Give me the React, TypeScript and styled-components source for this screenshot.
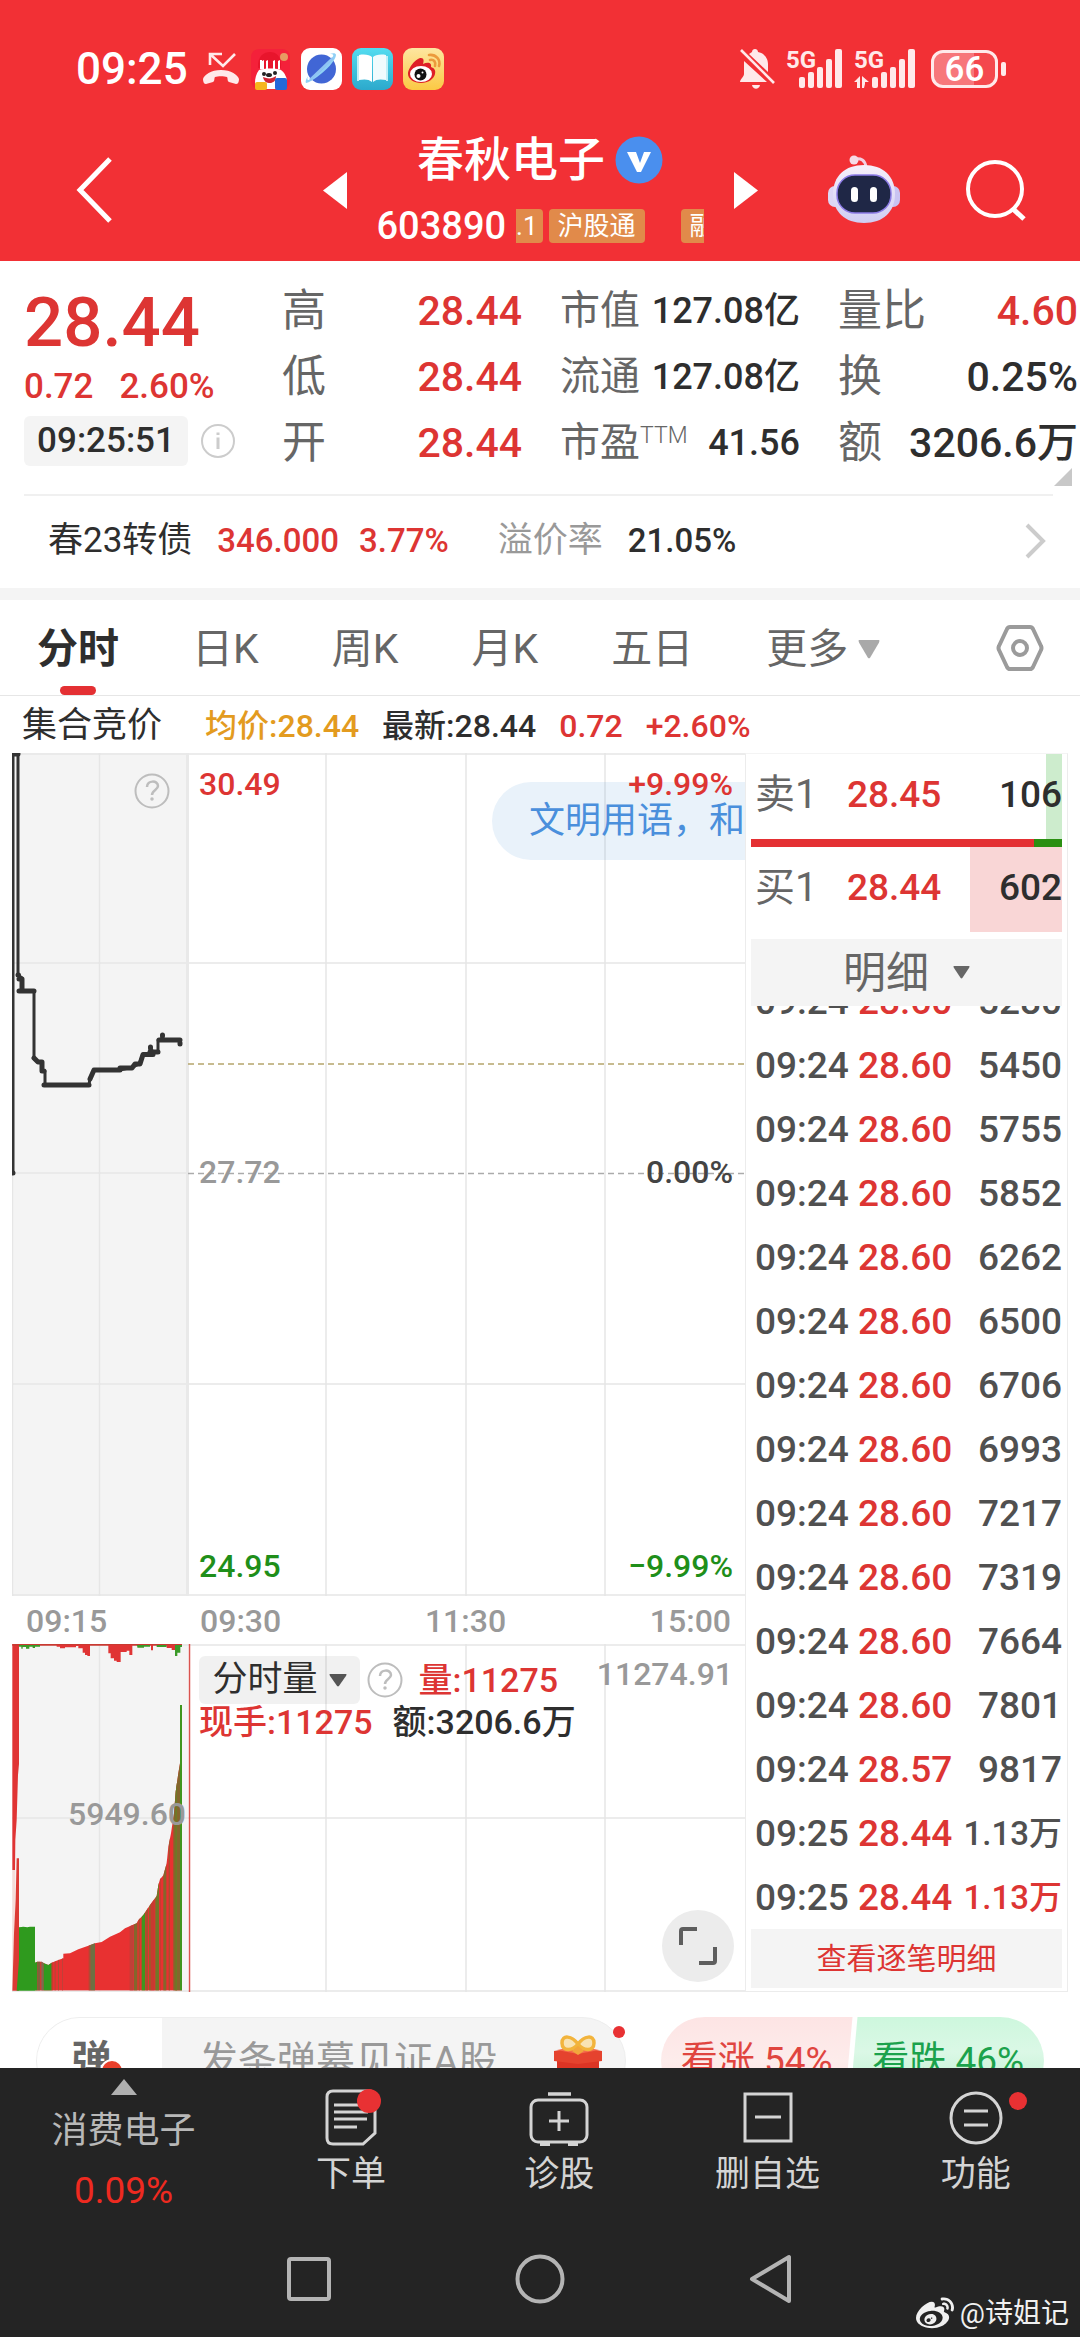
import React from "react";
import styled, { createGlobalStyle } from "styled-components";
import { FaWeibo } from "react-icons/fa";

const c = {
  brand: "#f23035",
  up: "#dd3533",
  down: "#1f8f1a",
  ink: "#2e2e2e",
  mid: "#666666",
  soft: "#999999",
  line: "#e6e6e6",
  fill: "#f4f4f4",
  dark: "#242424",
};

const GlobalStyle = createGlobalStyle`
  *, *::before, *::after { box-sizing: border-box; }
  body {
    margin: 0;
    background: #ffffff;
    color: ${c.ink};
    font-family: Roboto, "Noto Sans CJK SC", sans-serif;
    font-size: 35px;
    line-height: 44px;
    overflow-x: hidden;
  }
  button, select, input {
    margin: 0;
    padding: 0;
    border: 0;
    background: none;
    color: inherit;
    font: inherit;
    appearance: none;
  }
  svg { display: block; flex: none; }
  table { border-collapse: collapse; }
  dl, dt, dd, p, h1 { margin: 0; }
`;

/* ---------- top ---------- */

const Top = styled.header`
  background: ${c.brand};
  color: #ffffff;
`;

const StatusBar = styled.div`
  display: flex;
  align-items: center;
  justify-content: space-between;
  height: 132px;
  padding: 6px 74px 0 76px;
`;

const StatusGroup = styled.div<{ $gap: number }>`
  display: flex;
  align-items: center;
  gap: ${(p) => p.$gap}px;
`;

const Clock = styled.time`
  margin-right: 4px;
  font-size: 44px;
  font-weight: 500;
`;

const BatteryBody = styled.span`
  width: 67px;
  height: 38px;
  border: 3px solid #ffe9ea;
  border-radius: 12px;
  background: linear-gradient(90deg, #f7777b 66%, #f4484d 66%);
  font-size: 35px;
  font-weight: 500;
  line-height: 34px;
  text-align: center;
`;

const Battery = styled.span`
  display: flex;
  align-items: center;
  gap: 3px;
  margin-left: 4px;
  &::after {
    content: "";
    width: 5px;
    height: 14px;
    border-radius: 2px;
    background: #ffe9ea;
  }
`;

const TitleBar = styled.div`
  display: grid;
  grid-template-columns: 1fr auto 1fr;
  align-items: center;
  padding: 0 54px 13px 76px;
`;

const IconButton = styled.button`
  display: flex;
  align-items: center;
  justify-content: center;
`;

const Stock = styled.div`
  display: flex;
  align-items: center;
  gap: 30px;
  margin-right: 22px;
`;

const StockText = styled.div`
  display: flex;
  flex-direction: column;
  align-items: center;
  gap: 16px;
  width: 327px;
`;

const NameLine = styled.div`
  display: flex;
  align-items: center;
  gap: 10px;
  h1 {
    font-size: 47px;
    font-weight: 500;
    line-height: 56px;
    white-space: nowrap;
  }
`;

const CodeLine = styled.div`
  display: flex;
  align-items: center;
  gap: 10px;
  width: 100%;
  font-size: 38px;
  font-weight: 500;
`;

const Tags = styled.div`
  display: flex;
  flex: 1;
  gap: 6px;
  overflow: hidden;
`;

const Tag = styled.span<{ $cut?: boolean; $after?: boolean }>`
  flex: none;
  height: 34px;
  padding: ${(p) => (p.$cut ? "0 5px 0 0" : "0 9px")};
  margin-left: ${(p) => (p.$after ? 30 : 0)}px;
  border-radius: ${(p) => (p.$cut ? "0 4px 4px 0" : "4px")};
  background: #e18a4a;
  font-size: 26px;
  font-weight: 400;
  line-height: 34px;
`;

const TopActions = styled.div`
  display: flex;
  align-items: center;
  justify-content: flex-end;
  gap: 66px;
`;

/* ---------- quote ---------- */

const Quote = styled.section`
  position: relative;
  display: grid;
  grid-template-columns: 220px 1fr 1fr 1fr;
  column-gap: 38px;
  padding: 17px 2px 18px 24px;
`;

const Now = styled.div`
  display: flex;
  flex-direction: column;
  gap: 4px;
  padding-top: 10px;
  color: ${c.up};
  white-space: nowrap;
`;

const Price = styled.strong`
  font-size: 69px;
  font-weight: 500;
  line-height: 70px;
`;

const Change = styled.div`
  display: flex;
  gap: 26px;
  font-size: 35px;
  font-weight: 500;
  line-height: 50px;
`;

const TimeLine = styled.div`
  display: flex;
  align-items: center;
  gap: 12px;
`;

const TimeChip = styled.time`
  width: 164px;
  border-radius: 6px;
  background: ${c.fill};
  color: ${c.ink};
  font-size: 35px;
  font-weight: 500;
  line-height: 50px;
  text-align: center;
`;

const Stats = styled.dl`
  div {
    display: flex;
    align-items: center;
    justify-content: space-between;
    height: 66px;
    white-space: nowrap;
  }
`;

const StatName = styled.dt<{ $small?: boolean }>`
  display: flex;
  color: ${c.mid};
  font-size: ${(p) => (p.$small ? 40 : 44)}px;
  sup {
    font-size: 23px;
    font-weight: 300;
    line-height: 30px;
  }
`;

const StatValue = styled.dd<{ $small?: boolean; $up?: boolean }>`
  color: ${(p) => (p.$up ? c.up : c.ink)};
  font-size: ${(p) => (p.$small ? 36 : 41)}px;
  font-weight: 500;
`;

const Corner = styled.i`
  position: absolute;
  right: 8px;
  bottom: 8px;
  border: 9px solid #c8c8c8;
  border-top-color: transparent;
  border-left-color: transparent;
`;

const Bond = styled.a`
  display: flex;
  align-items: center;
  height: 94px;
  margin: 0 27px 0 24px;
  padding: 0 7px 2px 24px;
  border-top: 2px solid #f0f0f0;
  color: ${c.ink};
  text-decoration: none;
  white-space: nowrap;
  svg { margin-left: auto; }
`;

const BondText = styled.span<{ $tone?: string; $gap?: number; $num?: boolean }>`
  margin-right: ${(p) => p.$gap ?? 0}px;
  color: ${(p) => p.$tone ?? c.ink};
  font-size: ${(p) => (p.$num ? 33 : 35)}px;
  font-weight: ${(p) => (p.$num ? 500 : 400)};
`;

const Band = styled.div`
  height: 12px;
  background: ${c.fill};
`;

/* ---------- tabs ---------- */

const Tabs = styled.nav`
  display: flex;
  align-items: center;
  gap: 73px;
  height: 96px;
  padding: 0 36px 0 37px;
  border-bottom: 1px solid ${c.line};
  font-size: 41px;
`;

const Tab = styled.button<{ $on?: boolean }>`
  display: flex;
  flex-direction: column;
  align-items: center;
  justify-content: center;
  position: relative;
  height: 95px;
  padding-top: 3px;
  color: ${(p) => (p.$on ? c.ink : c.mid)};
  font-weight: ${(p) => (p.$on ? 700 : 400)};
  white-space: nowrap;
  &::after {
    content: "";
    display: ${(p) => (p.$on ? "block" : "none")};
    position: absolute;
    bottom: 0;
    width: 36px;
    height: 9px;
    border-radius: 5px;
    background: #e43033;
  }
`;

const Picker = styled.label<{ $gap: number }>`
  display: flex;
  align-items: center;
  justify-content: center;
  gap: ${(p) => p.$gap}px;
`;

const MorePicker = styled(Picker)`
  padding-top: 3px;
  color: ${c.mid};
`;

const Settings = styled(IconButton)`
  margin-left: auto;
`;

const Legend = styled.div`
  display: flex;
  align-items: center;
  gap: 23px;
  height: 57px;
  padding: 2px 0 0 22px;
  white-space: nowrap;
`;

const LegendItem = styled.span<{ $tone?: string; $lead?: boolean }>`
  margin-right: ${(p) => (p.$lead ? 20 : 0)}px;
  color: ${(p) => p.$tone ?? c.ink};
  font-size: ${(p) => (p.$lead ? 35 : 32)}px;
  font-weight: ${(p) => (p.$lead ? 400 : 500)};
`;

/* ---------- charts ---------- */

const Market = styled.main`
  display: grid;
  grid-template-columns: minmax(0, 1fr) 323px;
  padding: 0 12px;
`;

const Plot = styled.div<{ $h: number }>`
  position: relative;
  height: ${(p) => p.$h}px;
  overflow: hidden;
  > svg {
    width: 100%;
    height: 100%;
  }
`;

const Mark = styled.span<{ $top: number; $left?: number; $right?: number; $tone: string }>`
  position: absolute;
  top: ${(p) => p.$top}px;
  left: ${(p) => (p.$left === undefined ? "auto" : p.$left + "px")};
  right: ${(p) => (p.$right === undefined ? "auto" : p.$right + "px")};
  color: ${(p) => p.$tone};
  font-size: 32px;
  font-weight: 500;
  line-height: 40px;
  white-space: nowrap;
`;

const Bullet = styled.div`
  position: absolute;
  top: 29px;
  right: 0;
  width: 253px;
  height: 78px;
  padding-left: 37px;
  border-radius: 39px 0 0 39px;
  background: rgba(74, 144, 217, 0.12);
  color: #4a8fdc;
  font-size: 36px;
  line-height: 78px;
  white-space: nowrap;
`;

const Help = styled(IconButton)`
  position: absolute;
  top: 20px;
  left: 122px;
`;

const Axis = styled.div`
  display: grid;
  grid-template-columns: 174px 1fr 1fr 1fr;
  align-items: center;
  height: 48px;
  padding: 2px 14px 0;
  color: ${c.soft};
  font-size: 32px;
  font-weight: 500;
  span:nth-child(3) { text-align: center; }
  span:nth-child(4) { text-align: right; }
`;

const VolumeHead = styled.div`
  position: absolute;
  top: 12px;
  left: 187px;
  white-space: nowrap;
`;

const VolumeLine = styled.div<{ $gap: number; $h: number }>`
  display: flex;
  align-items: center;
  gap: ${(p) => p.$gap}px;
  height: ${(p) => p.$h}px;
`;

const VolumePicker = styled(Picker)`
  width: 161px;
  height: 48px;
  border-radius: 6px;
  background: rgba(0, 0, 0, 0.055);
  font-size: 35px;
`;

const Tone = styled.span<{ $tone?: string }>`
  color: ${(p) => p.$tone ?? c.ink};
  font-size: 34px;
  font-weight: 500;
`;

const Expand = styled(IconButton)`
  position: absolute;
  right: 11px;
  bottom: 10px;
  width: 72px;
  height: 72px;
  border-radius: 50%;
  background: #ececec;
`;

/* ---------- order book ---------- */

const Book = styled.aside`
  display: flex;
  flex-direction: column;
  min-height: 0;
  height: 1239px;
  padding: 0 5px 3px 5px;
  border: 1px solid #ececec;
  border-top-color: #f4f4f4;
`;

const Level = styled.div<{ $depth: string; $width: number }>`
  display: grid;
  grid-template-columns: 92px 1fr auto;
  align-items: center;
  height: 85px;
  padding: 0 0 4px 4px;
  background: linear-gradient(${(p) => p.$depth}, ${(p) => p.$depth}) right / ${(p) => p.$width}px 100% no-repeat;
  color: ${c.ink};
  font-size: 37px;
  font-weight: 500;
  span { color: ${c.mid}; font-size: 40px; font-weight: 400; }
  b { color: ${c.up}; font-weight: 500; }
  em { font-style: normal; }
`;

const Ratio = styled.div`
  height: 8px;
  background: linear-gradient(90deg, #e43033 91%, #2b8f12 91%);
`;

const DetailPicker = styled(Picker)`
  flex: none;
  height: 67px;
  margin-top: 7px;
  background: ${c.fill};
  color: ${c.mid};
  font-size: 43px;
  line-height: 56px;
`;

const Trades = styled.div`
  display: flex;
  flex: 1;
  flex-direction: column;
  justify-content: flex-end;
  min-height: 0;
  overflow: hidden;
`;

const TradeTable = styled.table`
  flex: none;
  width: 100%;
  table-layout: fixed;
  color: #505050;
  font-size: 37px;
  font-weight: 500;
  tr { height: 64px; }
  td { padding: 2px 0 0; white-space: nowrap; }
  td:nth-child(1) { width: 107px; padding-left: 4px; }
  td:nth-child(2) { width: 98px; color: ${c.up}; }
`;

const Volume = styled.td<{ $compact: boolean; $up: boolean }>`
  color: ${(p) => (p.$up ? c.up : "#505050")};
  font-size: ${(p) => (p.$compact ? 33 : 37)}px;
  text-align: right;
`;

const AllTrades = styled.button`
  flex: none;
  height: 59px;
  background: ${c.fill};
  color: ${c.up};
  font-size: 30px;
`;

/* ---------- comment strip ---------- */

const Strip = styled.section`
  display: flex;
  gap: 35px;
  padding: 25px 36px 230px;
`;

const CommentBox = styled.div`
  position: relative;
  display: flex;
  flex: 1;
  align-items: center;
  min-width: 0;
  height: 88px;
  border: 1px solid #eeeeee;
  border-radius: 44px;
  background: ${c.fill};
`;

const Toggle = styled.button`
  position: relative;
  flex: none;
  width: 125px;
  height: 86px;
  padding-right: 16px;
  border-radius: 43px 0 0 43px;
  background: #ffffff;
  color: ${c.mid};
  font-size: 40px;
  font-weight: 700;
  line-height: 80px;
`;

const OnMark = styled.i`
  position: absolute;
  top: 41px;
  left: 63px;
  width: 24px;
  height: 24px;
  border: 2px solid #ffffff;
  border-radius: 50%;
  background: #e8402c;
`;

const Comment = styled.input`
  flex: 1;
  width: 0;
  min-width: 0;
  padding-left: 37px;
  font-size: 39px;
  outline: none;
  &::placeholder { color: ${c.soft}; opacity: 1; }
`;

const Gift = styled(IconButton)`
  margin-right: 23px;
`;

const Dot = styled.i<{ $size: number; $top: number; $right: number }>`
  position: absolute;
  top: ${(p) => p.$top}px;
  right: ${(p) => p.$right}px;
  width: ${(p) => p.$size}px;
  height: ${(p) => p.$size}px;
  border-radius: 50%;
  background: #e83133;
`;

const Vote = styled.div`
  display: flex;
  flex: none;
  width: 383px;
`;

const VoteButton = styled.button<{ $up?: boolean }>`
  flex: 1;
  height: 88px;
  border-radius: ${(p) => (p.$up ? "44px 0 0 44px" : "0 44px 44px 0")};
  clip-path: ${(p) =>
    p.$up ? "polygon(0 0, 100% 0, calc(100% - 8px) 100%, 0 100%)" : "polygon(5px 0, 100% 0, 100% 100%, -3px 100%)"};
  background: ${(p) =>
    p.$up ? "linear-gradient(#fde4e4, #fdeceb 50%, #fcdcdc)" : "linear-gradient(#cdf7dd, #dbf8e6 40%, #b5eecb)"};
  color: ${(p) => (p.$up ? "#e0453f" : "#1ba24c")};
  font-size: 37px;
  white-space: nowrap;
`;

/* ---------- bottom ---------- */

const Bottom = styled.footer`
  position: fixed;
  right: 0;
  bottom: 0;
  left: 0;
  background: ${c.dark};
  color: #c8c8c8;
`;

const Tools = styled.div`
  display: grid;
  grid-template-columns: 247px repeat(4, 1fr);
  height: 150px;
`;

const Tool = styled.button`
  display: flex;
  flex-direction: column;
  align-items: center;
  justify-content: flex-start;
  gap: 7px;
  padding-top: 20px;
  color: #d4d4d4;
  font-size: 35px;
`;

const ToolIcon = styled.span`
  position: relative;
`;

const Sector = styled.button`
  display: flex;
  flex-direction: column;
  align-items: center;
  justify-content: flex-start;
  padding-top: 11px;
  color: #b8b8b8;
  font-size: 36px;
  svg { margin-bottom: 14px; }
  span:last-child { margin-top: 16px; color: #ee2a20; font-size: 37px; }
`;

const SystemBar = styled.div`
  display: flex;
  align-items: flex-start;
  justify-content: center;
  gap: 182px;
  height: 119px;
  padding-top: 36px;
`;

const Watermark = styled.div`
  position: absolute;
  right: 11px;
  bottom: 4px;
  display: flex;
  align-items: center;
  gap: 6px;
  color: #f0f0f0;
  font-size: 28px;
  line-height: 34px;
`;

/* ---------- icons ---------- */

const MissedCall = () => (
  <svg width="38" height="34" viewBox="0 0 38 34" fill="none">
    <path d="M8 13V2h12M8 2l13 12L33 2" stroke="#ffe9ea" strokeWidth="2.6" />
    <path d="M1 27c1-4 8-9 18-9s17 5 18 9c0 3-1 5-3 5l-7-2c-2-1-1-4-2-5-3-1-9-1-12 0-1 1 0 4-2 5l-7 2c-2 0-3-2-3-5Z" fill="#ffe9ea" />
  </svg>
);

const ShopApp = () => (
  <svg width="41" height="42" viewBox="0 0 41 42">
    <rect x="1" y="1" width="39" height="40" rx="8" fill="#f4213a" />
    <path d="M8 20C7 8 14 4 20 4s12 4 11 16Z" fill="#e8152c" />
    <circle cx="34" cy="9" r="4" fill="#e79a62" />
    <path d="M12 13l2-1v9h-2zM16 13l2-1v9h-2zM23 13l2-1v9h-2zM28 13l2-1v9h-2z" fill="#fff" />
    <path d="M10 12h2v9h-2z" fill="#fff" />
    <path d="M9 22c5-2 18-2 22 0 4 3 6 8 6 12l-4 7H8l-3-6c0-5 1-9 4-13Z" fill="#fff" />
    <circle cx="14" cy="26" r="2" fill="#222" />
    <circle cx="25" cy="25" r="2" fill="#222" />
    <ellipse cx="19" cy="27" rx="3" ry="2" fill="#222" />
    <path d="M13 29c5 2 9 2 13-1 0 5-3 7-6 7s-6-1-7-6Z" fill="#cf2634" />
    <rect x="5" y="34" width="12" height="8" rx="2" fill="#f6b61c" />
    <rect x="25" y="30" width="12" height="12" rx="2" fill="#2468d8" />
  </svg>
);

const BrowserApp = () => (
  <svg width="41" height="42" viewBox="0 0 41 42">
    <rect width="41" height="42" rx="9" fill="#fff" />
    <circle cx="20.500" cy="21" r="14.500" fill="#4166d5" />
    <path d="M5 35C10 35 34 17 35 7c0-2-3-2-6-1 4 0 4 1 2 4C26 18 14 29 8 32c-2 0-2-1-1-4-2 3-3 6-2 7Z" fill="#8fd0f5" />
    <path d="m9 32 23-22" stroke="#8fc4f3" strokeWidth="2.500" />
  </svg>
);

const BookApp = () => (
  <svg width="41" height="42" viewBox="0 0 41 42">
    <defs>
      <linearGradient id="bookSky" x2="0" y2="1">
        <stop stopColor="#53dcf0" />
        <stop offset="1" stopColor="#2ca9cc" />
      </linearGradient>
    </defs>
    <rect width="41" height="42" rx="9" fill="url(#bookSky)" />
    <path d="M5 8h2v25h-2zM34 8h2v25h-2z" fill="#bfeff7" />
    <path d="M7 7c6-1 11 0 13 2v25c-3-3-8-3-13-2Z" fill="#fff" />
    <path d="M34 7c-6-1-11 0-13 2v25c3-3 8-3 13-2Z" fill="#f0fbfd" />
  </svg>
);

const WeiboApp = () => (
  <svg width="41" height="42" viewBox="0 0 41 42">
    <defs>
      <linearGradient id="weiboGold" x2="0" y2="1">
        <stop stopColor="#fde6a0" />
        <stop offset="1" stopColor="#fbc944" />
      </linearGradient>
    </defs>
    <rect width="41" height="42" rx="9" fill="url(#weiboGold)" />
    <path d="M18 10c3 0 3 3 2 6 4-2 9-2 8 3 3 1 5 3 4 7-1 5-7 9-14 9S5 31 5 26c0-6 8-16 13-16Z" fill="#df1f26" />
    <ellipse cx="18" cy="26" rx="11" ry="8" fill="#fff" />
    <circle cx="17.500" cy="26.500" r="6" fill="#111" />
    <circle cx="15.500" cy="28" r="2" fill="#fff" />
    <circle cx="19.500" cy="24.500" r="1" fill="#fff" />
    <path d="M26 7c7-1 12 5 10 11M27 12c4-1 6 2 5 6" fill="none" stroke="#ec9a3c" strokeWidth="2.600" strokeLinecap="round" />
  </svg>
);

const Muted = () => (
  <svg width="36" height="42" viewBox="0 0 36 42" fill="#ffe9ea">
    <path d="M5 13 28 34H1c0-3 4-5 4-8ZM10 6l3-2c0-4 6-4 6 0 6 1 10 6 10 12v8Z" />
    <path d="M13 37h8c-1 5-7 5-8 0Z" />
    <path d="m2 2 33 33" stroke="#ffe9ea" strokeWidth="2.600" />
  </svg>
);

const Signal = ({ data }: { data?: boolean }) => (
  <svg width={data ? 62 : 57} height="40" viewBox={data ? "0 0 62 40" : "0 0 57 40"} fill="#ffe9ea">
    <text x="0" y="19" fontSize="24" fontWeight="700" fontFamily="Roboto, sans-serif">5G</text>
    {data && <path d="M6 27v12H3v-6H0ZM8 27l7 6h-4v2l-1 4H8Z" />}
    <g transform={data ? "translate(5 0)" : undefined}>
      <rect x="13" y="28" width="6" height="11" rx="2" />
      <rect x="22" y="23" width="6" height="16" rx="2" />
      <rect x="31" y="18" width="6" height="21" rx="2" />
      <rect x="40" y="10" width="6" height="29" rx="2" />
      <rect x="49" y="0" width="7" height="39" rx="2" />
    </g>
  </svg>
);

const Robot = () => (
  <svg width="72" height="70" viewBox="0 0 72 70">
    <defs>
      <linearGradient id="shell" x2="0" y2="1">
        <stop stopColor="#f7f0fa" />
        <stop offset="1" stopColor="#cfcdf3" />
      </linearGradient>
    </defs>
    <path d="M27 4c6-1 10 1 11 8" fill="none" stroke="#f3cfe0" strokeWidth="3" />
    <circle cx="26" cy="5" r="4.500" fill="#f6dbe6" />
    <rect y="31" width="14" height="21" rx="7" fill="#ddd6f5" />
    <rect x="58" y="31" width="14" height="21" rx="7" fill="#c9c3f2" />
    <path d="M36 10c19 0 31 11 31 29S55 68 36 68 5 57 5 39s12-29 31-29Z" fill="url(#shell)" />
    <rect x="9" y="20" width="54" height="38" rx="18" fill="#1f2746" stroke="#8c7be6" strokeWidth="1.500" />
    <rect x="23" y="32" width="7" height="15" rx="3.500" fill="#fff" />
    <rect x="42" y="32" width="7" height="15" rx="3.500" fill="#fff" />
  </svg>
);

const Caret = ({ w, h, fill }: { w: number; h: number; fill: string }) => (
  <svg width={w} height={h} viewBox="0 0 20 14" preserveAspectRatio="none">
    <path d="M1 0h18q1 0 0 2L11 13q-1 1-2 0L1 2q-1-2 0-2Z" fill={fill} />
  </svg>
);

const Question = () => (
  <svg width="36" height="36" viewBox="0 0 36 36" fill="none" stroke="#bdbdbd" strokeWidth="2">
    <circle cx="18" cy="18" r="16.500" />
    <path d="M13 14c0-7 11-7 11-1 0 4-6 4-6 9" strokeWidth="2.500" />
    <circle cx="18" cy="26" r="1" strokeWidth="1.500" fill="#bdbdbd" />
  </svg>
);

const GiftIcon = () => (
  <svg width="48" height="52" viewBox="0 0 48 52">
    <path d="M3 24h42v22q0 4-4 4H7q-4 0-4-4Z" fill="#dc3424" />
    <path d="m0 16 24-4 24 4v10l-24 3L0 26Z" fill="#e5432e" />
    <path d="m3 15 21-4 21 4-21 4Z" fill="#f46a4c" />
    <path d="M24 9C18 1 8-1 8 8s11 8 16 1c5 7 16 8 16-1S30 1 24 9Z" fill="#f8e3b4" stroke="#f2b43c" strokeWidth="3.500" />
    <path d="m18 16 6-5 6 5-6 4Z" fill="#f2a63c" />
  </svg>
);

/* ---------- data ---------- */

const stats = [
  [
    { name: "高", value: "28.44", up: true },
    { name: "低", value: "28.44", up: true },
    { name: "开", value: "28.44", up: true },
  ],
  [
    { name: "市值", value: "127.08亿" },
    { name: "流通", value: "127.08亿" },
    { name: "市盈", note: "TTM", value: "41.56" },
  ],
  [
    { name: "量比", value: "4.60", up: true },
    { name: "换", value: "0.25%" },
    { name: "额", value: "3206.6万" },
  ],
] as { name: string; note?: string; value: string; up?: boolean }[][];

const trades: [string, string, string][] = [
  ["09:24", "28.60", "5280"],
  ["09:24", "28.60", "5450"],
  ["09:24", "28.60", "5755"],
  ["09:24", "28.60", "5852"],
  ["09:24", "28.60", "6262"],
  ["09:24", "28.60", "6500"],
  ["09:24", "28.60", "6706"],
  ["09:24", "28.60", "6993"],
  ["09:24", "28.60", "7217"],
  ["09:24", "28.60", "7319"],
  ["09:24", "28.60", "7664"],
  ["09:24", "28.60", "7801"],
  ["09:24", "28.57", "9817"],
  ["09:25", "28.44", "1.13万"],
  ["09:25", "28.44", "1.13万"],
];

const gridX = [314, 454, 593];

/* x and width of the mixed and falling bars, in thirds of a pixel */
const stripes: [number, number, string][] = [
  [105, 7, "#2f9a1e"], [112, 9, "#83603c"], [124, 7, "#7c6a52"], [131, 24, "#2f9a1e"],
  [155, 3, "#b3402c"], [164, 3, "#b04a34"], [174, 3, "#b04a34"], [186, 3, "#c04038"],
  [266, 5, "#b04a34"], [271, 14, "#6f7042"], [389, 12, "#c04038"], [402, 10, "#84662c"],
  [416, 4, "#a8502c"], [425, 10, "#3f961e"], [436, 8, "#a8502c"], [448, 4, "#6d7a26"],
  [452, 12, "#c83a30"], [466, 11, "#727628"], [480, 3, "#c83a30"], [490, 9, "#84662c"],
  [506, 4, "#a8502c"], [520, 20, "#84662c"], [526, 5, "#6d7a26"], [540, 6, "#3f961e"],
];

const PriceChart = () => (
  <svg viewBox="0 0 733 843" preserveAspectRatio="none" fill="none">
    <rect width="176" height="843" fill={c.fill} />
    <g stroke={c.line} strokeWidth="1.500">
      <path d="M0 1H733M0 210H733M0 420H176M0 631H733M0 842H733M0.500 0V843M87.500 0V843" />
      {gridX.map((x) => <path key={x} d={`M${x} 0V843`} />)}
    </g>
    <path d="M175.500 0V843" stroke="#e9e9e9" strokeWidth="3" />
    <path d="M176 311H733" stroke="#b5a56c" strokeWidth="1.500" strokeDasharray="6 4" />
    <path d="M176 420.500H733" stroke="#ababab" strokeWidth="1.500" strokeDasharray="6 4" />
    <path
      d="M1 420V1H6V222L10 225V238H22V306L26 309H30V318H33V332H77L78 325 82 317H108L121 314 127 311 131 301H138V294L141 299H146V287H150V282V287H168V291"
      stroke="#333333"
      strokeWidth="3"
      strokeLinejoin="round"
    />
    <path
      d="M0 420H1M0 1H6M6 222H6.500M7 238H22M22 305L26 309H30L30 318H32M32 332H77M78 326L82 317H108M108 315H120L123 311H128L131 301.500H141M138.500 294V295M138 299H146M147 287H168M150.500 282V283M168 291V290M7 226H10V238"
      stroke="#333333"
      strokeWidth="5"
      strokeLinecap="round"
      strokeLinejoin="round"
    />
  </svg>
);

const VolumeChart = () => (
  <svg viewBox="0 0 733 348" preserveAspectRatio="none">
    <defs>
      <clipPath id="rise">
        <path d="M105 1052V968L112 965H125L132 970 145 975 155 968 175 960 190 955V941L210 940 235 928 265 917 285 910 305 906 330 890 360 877 375 865 410 850 415 840 430 825 450 795 470 768 475 735 480 718 490 706 500 670 505 620 513 580 522 520 527 455 535 400 540 370V195H546V1052Z" />
      </clipPath>
    </defs>
    <rect width="176" height="348" fill={c.fill} />
    <g stroke={c.line} strokeWidth="1.500" fill="none">
      <path d="M0 1H733M0 174H733M0 347H733M87.500 0V348" />
      {gridX.map((x) => <path key={x} d={`M${x} 0V348`} />)}
    </g>
    <g transform="translate(-12 -4) scale(0.333333)">
      <path d="M37 690H45L47 780 42 900 37 1052Z" fill="#f6dcd8" />
      <path d="M37 12H57V372L54 405 50 540 46 600 45 690H37Z" fill="#e03434" />
      <path d="M50 655H57V1052H37L42 880 47 780Z" fill="#dc3a34" />
      <path d="M57 862 70 860 82 862 90 860H105V1052H50L57 960Z" fill="#2f9a1e" />
      <g clipPath="url(#rise)">
        <rect x="105" y="190" width="441" height="862" fill="#e83131" />
        {stripes.map(([x, w, fill]) => <rect key={x} x={x} y="190" width={w} height="862" fill={fill} />)}
      </g>
      <path d="M37 11H546V17H37Z" fill="#c93a32" />
      <path d="M57 15H120V20H105V24H98V20H88V26H78V21H68V26H64V20H57ZM410 15H450V20H432V23H412V20ZM470 15H500V21H470ZM525 15H546V21H541V38H532V48H525Z" fill="#3a9a28" />
      <path d="M170 15V20H180V25H195V22H228V18H235V25H248V38H255V45H262V48H270V15ZM325 15V40H332V55H342V62H350V66H362V36H380V32H388V45H397V15ZM453 15V31H459V15ZM500 15V24H515V30H525V15Z" fill="#e03434" />
    </g>
    <path d="M177.500 0V348" stroke="#d9534f" strokeWidth="1.500" />
  </svg>
);

/* ---------- page ---------- */

export default function App() {
  return (
    <>
      <GlobalStyle />
      <Top>
        <StatusBar>
          <StatusGroup $gap={10}>
            <Clock>09:25</Clock>
            <MissedCall />
            <ShopApp />
            <BrowserApp />
            <BookApp />
            <WeiboApp />
          </StatusGroup>
          <StatusGroup $gap={11}>
            <Muted />
            <Signal />
            <Signal data />
            <Battery><BatteryBody>66</BatteryBody></Battery>
          </StatusGroup>
        </StatusBar>
        <TitleBar>
          <div>
            <IconButton aria-label="返回">
              <svg width="38" height="68" viewBox="0 0 38 68" fill="none" stroke="#fff" strokeWidth="5">
                <path d="M34 3 4 34l30 31" />
              </svg>
            </IconButton>
          </div>
          <Stock>
            <IconButton aria-label="上一只">
              <svg width="24" height="37" viewBox="0 0 24 37"><path d="M24 0v37L0 18.500Z" fill="#fff" /></svg>
            </IconButton>
            <StockText>
              <NameLine>
                <h1>春秋电子</h1>
                <svg width="48" height="48" viewBox="0 0 48 48">
                  <circle cx="24" cy="24" r="23.500" fill="#4a8fee" />
                  <path d="M12 16h9l4 11 4-11h7L26 36h-4Z" fill="#fff" />
                </svg>
              </NameLine>
              <CodeLine>
                <span>603890</span>
                <Tags>
                  <Tag $cut>.1</Tag>
                  <Tag>沪股通</Tag>
                  <Tag $after>融</Tag>
                </Tags>
              </CodeLine>
            </StockText>
            <IconButton aria-label="下一只">
              <svg width="24" height="37" viewBox="0 0 24 37"><path d="M0 0v37l24-18.500Z" fill="#fff" /></svg>
            </IconButton>
          </Stock>
          <TopActions>
            <IconButton aria-label="智能助手"><Robot /></IconButton>
            <IconButton aria-label="搜索">
              <svg width="60" height="62" viewBox="0 0 60 62" fill="none" stroke="#fff" strokeWidth="4">
                <circle cx="29" cy="30" r="27" />
                <path d="m47 50 11 10" strokeWidth="5" />
              </svg>
            </IconButton>
          </TopActions>
        </TitleBar>
      </Top>

      <Quote>
        <Now>
          <Price>28.44</Price>
          <Change><span>0.72</span><span>2.60%</span></Change>
          <TimeLine>
            <TimeChip>09:25:51</TimeChip>
            <IconButton aria-label="说明">
              <svg width="36" height="36" viewBox="0 0 36 36" fill="none" stroke="#cccccc" strokeWidth="2">
                <circle cx="18" cy="18" r="16" />
                <path d="M18 14.500V26M18 9.500V12" strokeWidth="3" />
              </svg>
            </IconButton>
          </TimeLine>
        </Now>
        {stats.map((col, i) => (
          <Stats key={i}>
            {col.map((s) => (
              <div key={s.name}>
                <StatName $small={i === 1}>{s.name}{s.note && <sup>{s.note}</sup>}</StatName>
                <StatValue $small={i === 1} $up={s.up}>{s.value}</StatValue>
              </div>
            ))}
          </Stats>
        ))}
        <Corner />
      </Quote>

      <Bond href="#bond">
        <BondText $gap={25}>春23转债</BondText>
        <BondText $num $tone={c.up} $gap={20}>346.000</BondText>
        <BondText $num $tone={c.up} $gap={49}>3.77%</BondText>
        <BondText $tone={c.soft} $gap={25}>溢价率</BondText>
        <BondText $num>21.05%</BondText>
        <svg width="22" height="36" viewBox="0 0 22 36" fill="none" stroke="#cccccc" strokeWidth="4">
          <path d="m3 2 16 16L3 34" />
        </svg>
      </Bond>
      <Band />

      <Tabs>
        <Tab $on>分时</Tab>
        <Tab>日K</Tab>
        <Tab>周K</Tab>
        <Tab>月K</Tab>
        <Tab>五日</Tab>
        <MorePicker $gap={10}>
          <select aria-label="更多周期"><option>更多</option></select>
          <Caret w={22} h={19} fill="#a9a9a9" />
        </MorePicker>
        <Settings aria-label="图表设置">
          <svg width="48" height="48" viewBox="0 0 48 48" fill="none" stroke="#9b9b9b" strokeWidth="4" strokeLinejoin="round">
            <path d="M14 3h20q2 0 3 2l8 17q1 2 0 4l-8 17q-1 2-3 2H14q-2 0-3-2L3 26q-1-2 0-4L11 5q1-2 3-2Z" />
            <circle cx="24" cy="24" r="7" />
          </svg>
        </Settings>
      </Tabs>

      <Legend>
        <LegendItem $lead>集合竞价</LegendItem>
        <LegendItem $tone="#e39b1f">均价:28.44</LegendItem>
        <LegendItem>最新:28.44</LegendItem>
        <LegendItem $tone={c.up}>0.72</LegendItem>
        <LegendItem $tone={c.up}>+2.60%</LegendItem>
      </Legend>

      <Market>
        <div>
          <Plot $h={843}>
            <PriceChart />
            <Bullet>文明用语，和</Bullet>
            <Help aria-label="集合竞价说明"><Question /></Help>
            <Mark $top={11} $left={187} $tone={c.up}>30.49</Mark>
            <Mark $top={11} $right={12} $tone={c.up}>+9.99%</Mark>
            <Mark $top={399} $left={187} $tone={c.soft}>27.72</Mark>
            <Mark $top={399} $right={12} $tone="#444444">0.00%</Mark>
            <Mark $top={793} $left={187} $tone={c.down}>24.95</Mark>
            <Mark $top={793} $right={12} $tone={c.down}>−9.99%</Mark>
          </Plot>
          <Axis>
            <span>09:15</span>
            <span>09:30</span>
            <span>11:30</span>
            <span>15:00</span>
          </Axis>
          <Plot $h={348}>
            <VolumeChart />
            <Mark $top={150} $left={56} $tone={c.soft}>5949.60</Mark>
            <Mark $top={10} $right={12} $tone={c.soft}>11274.91</Mark>
            <VolumeHead>
              <VolumeLine $gap={7} $h={48}>
                <VolumePicker $gap={10}>
                  <select aria-label="指标"><option>分时量</option></select>
                  <Caret w={18} h={13} fill="#555555" />
                </VolumePicker>
                <IconButton aria-label="指标说明"><Question /></IconButton>
                <Tone $tone={c.up}>&nbsp;量:11275</Tone>
              </VolumeLine>
              <VolumeLine $gap={20} $h={36}>
                <Tone $tone={c.up}>现手:11275</Tone>
                <Tone>额:3206.6万</Tone>
              </VolumeLine>
            </VolumeHead>
            <Expand aria-label="全屏">
              <svg width="38" height="38" viewBox="0 0 38 38" fill="none" stroke="#5e5e5e" strokeWidth="4">
                <path d="M2 18V4q0-2 2-2h14M36 20v14q0 2-2 2H20" />
              </svg>
            </Expand>
          </Plot>
        </div>

        <Book>
          <Level $depth="#cdeccd" $width={16}><span>卖1</span><b>28.45</b><em>106</em></Level>
          <Ratio />
          <Level $depth="#f9d6d6" $width={92}><span>买1</span><b>28.44</b><em>602</em></Level>
          <DetailPicker $gap={24}>
            <select aria-label="成交明细"><option>明细</option></select>
            <Caret w={17} h={13} fill="#666666" />
          </DetailPicker>
          <Trades>
            <TradeTable>
              <tbody>
                {trades.map(([time, price, volume], i) => (
                  <tr key={i}>
                    <td>{time}</td>
                    <td>{price}</td>
                    <Volume $compact={volume.endsWith("万")} $up={i === trades.length - 1}>{volume}</Volume>
                  </tr>
                ))}
              </tbody>
            </TradeTable>
          </Trades>
          <AllTrades>查看逐笔明细</AllTrades>
        </Book>
      </Market>

      <Strip>
        <CommentBox>
          <Toggle aria-label="弹幕开关">弹<OnMark /></Toggle>
          <Comment aria-label="弹幕" placeholder="发条弹幕见证A股" />
          <Gift aria-label="礼物"><GiftIcon /></Gift>
          <Dot $size={12} $top={8} $right={0} />
        </CommentBox>
        <Vote>
          <VoteButton $up>看涨 54%</VoteButton>
          <VoteButton>看跌 46%</VoteButton>
        </Vote>
      </Strip>

      <Bottom>
        <Tools>
          <Sector>
            <svg width="26" height="16" viewBox="0 0 26 16"><path d="m13 0 13 16H0Z" fill="#b0b0b0" /></svg>
            <span>消费电子</span>
            <span>0.09%</span>
          </Sector>
          <Tool>
            <ToolIcon>
              <svg width="52" height="58" viewBox="0 0 52 58" fill="none" stroke="#d4d4d4" strokeWidth="3">
                <path d="M8 3h36q6 0 6 6v36L38 56H8q-6 0-6-6V9q0-6 6-6ZM9 17h30M9 24h34M9 31h33M9 39h23" />
              </svg>
              <Dot $size={24} $top={1} $right={-4} />
            </ToolIcon>
            下单
          </Tool>
          <Tool>
            <ToolIcon>
              <svg width="60" height="58" viewBox="0 0 60 58" fill="none" stroke="#d4d4d4" strokeWidth="3">
                <path d="M19 6h23" strokeWidth="3.500" />
                <rect x="2" y="12" width="56" height="42" rx="7" />
                <path d="M20 33h20M30 23v20" />
                <path d="M11 56h10M39 56h10" strokeWidth="4" />
              </svg>
            </ToolIcon>
            诊股
          </Tool>
          <Tool>
            <ToolIcon>
              <svg width="50" height="58" viewBox="0 0 50 58" fill="none" stroke="#d4d4d4" strokeWidth="3">
                <rect x="2" y="6" width="46" height="47" />
                <path d="M12 29h26" />
              </svg>
            </ToolIcon>
            删自选
          </Tool>
          <Tool>
            <ToolIcon>
              <svg width="54" height="58" viewBox="0 0 54 58" fill="none" stroke="#d4d4d4" strokeWidth="3">
                <circle cx="27" cy="30" r="25" />
                <path d="M15 23h24M15 37h24" />
              </svg>
              <Dot $size={18} $top={4} $right={-24} />
            </ToolIcon>
            功能
          </Tool>
        </Tools>
        <SystemBar>
          <IconButton as="div">
            <svg width="48" height="50" viewBox="0 0 48 50" fill="none" stroke="#b4b4b4" strokeWidth="4">
              <rect x="4" y="5" width="40" height="40" rx="2" />
            </svg>
          </IconButton>
          <IconButton as="div">
            <svg width="50" height="50" viewBox="0 0 50 50" fill="none" stroke="#b4b4b4" strokeWidth="4">
              <circle cx="25" cy="25" r="22.500" />
            </svg>
          </IconButton>
          <IconButton as="div">
            <svg width="48" height="50" viewBox="0 0 48 50" fill="none" stroke="#b4b4b4" strokeWidth="4" strokeLinejoin="round">
              <path d="M42 3v44L5 25Z" />
            </svg>
          </IconButton>
        </SystemBar>
        <Watermark><FaWeibo size={38} />@诗姐记</Watermark>
      </Bottom>
    </>
  );
}
